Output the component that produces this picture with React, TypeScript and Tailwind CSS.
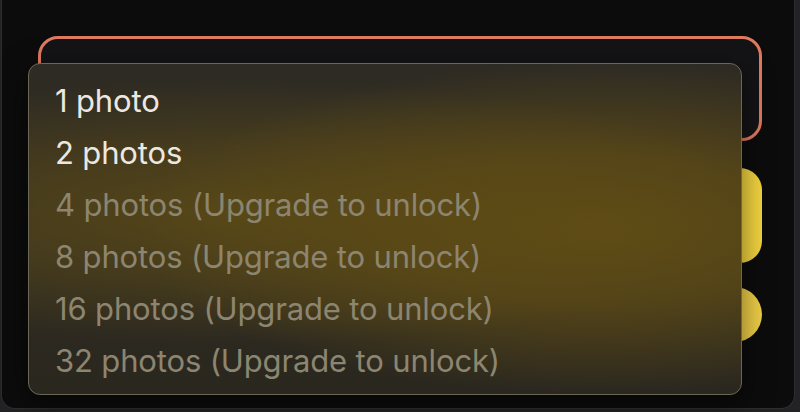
import React from "react";

const options = [
  { label: "1 photo", enabled: true },
  { label: "2 photos", enabled: true },
  { label: "4 photos (Upgrade to unlock)", enabled: false },
  { label: "8 photos (Upgrade to unlock)", enabled: false },
  { label: "16 photos (Upgrade to unlock)", enabled: false },
  { label: "32 photos (Upgrade to unlock)", enabled: false },
];

export default function App() {
  return (
    <div
      className="h-[412px] w-[800px] overflow-hidden bg-[#232325]"
      style={{ fontFamily: "Inter, 'Noto Sans', sans-serif" }}
    >
      <div className="relative h-[409px] w-[794px] ml-[1px] rounded-b-[14px] border-x border-b border-[#2e2e31] bg-[#0c0c0d]">
        <div className="flex flex-col pt-[36px] pl-[36px] pr-[32px]">
          <div className="h-[105px] rounded-[20px] border-[3px] border-[#e07a5f] bg-[#141416]" />
          <div className="mt-[27px] h-[95px] rounded-[22px] bg-[linear-gradient(90deg,#e9c93a,#f3d540)]" />
          <div className="mt-[24px] flex justify-end">
            <div className="h-[55px] w-[220px] rounded-full bg-[linear-gradient(90deg,#e9c93a,#f0cf48)]" />
          </div>
        </div>

        <div className="absolute left-[26px] top-[63px] w-[714px] h-[332px] overflow-hidden rounded-[12px] border-[1.5px] border-[#6b6656] bg-[radial-gradient(ellipse_65%_50%_at_80%_50%,#5f4c15_0%,rgba(95,76,21,0.75)_45%,rgba(95,76,21,0)_100%),radial-gradient(ellipse_75%_40%_at_30%_45%,rgba(88,72,24,0.95)_0%,rgba(88,72,24,0.55)_50%,rgba(88,72,24,0)_100%),linear-gradient(180deg,#2e2b24_0%,#302c22_50%,#2a271f_100%)] shadow-[0_8px_30px_rgba(0,0,0,0.5)]">
          <ul className="flex flex-col pt-[11px] pl-[26px]">
            {options.map((o) => (
              <li
                key={o.label}
                className={`h-[52px] flex items-center text-[31px] tracking-[-0.15px] ${
                  o.enabled ? "text-[#ece8e1]" : "text-[#8c8570]"
                }`}
              >
                {o.label}
              </li>
            ))}
          </ul>
        </div>
      </div>
    </div>
  );
}
